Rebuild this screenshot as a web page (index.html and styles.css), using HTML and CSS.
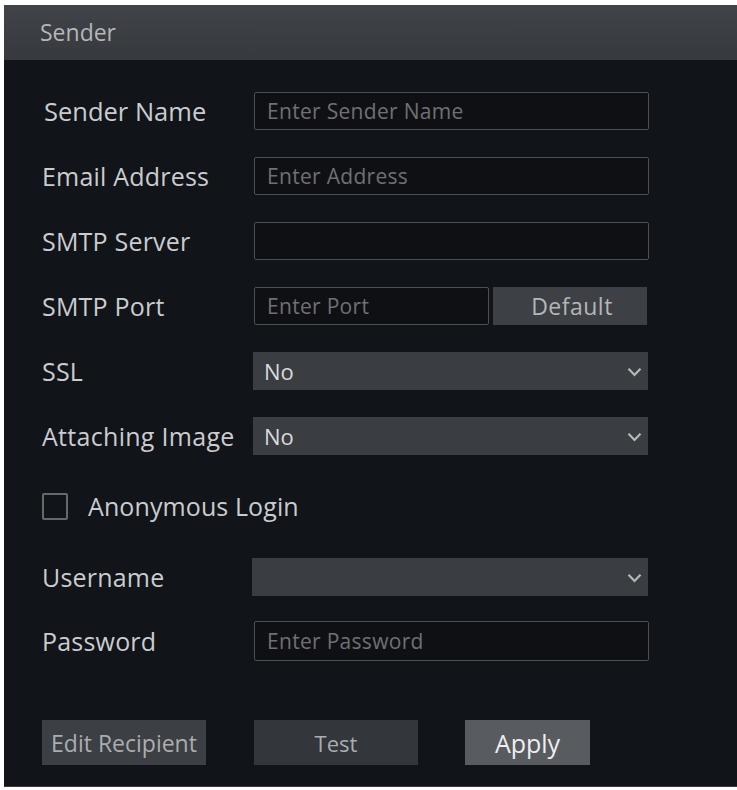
FILE: index.html
```html
<!DOCTYPE html>
<html>
<head>
<meta charset="utf-8">
<link rel="stylesheet" href="styles.css">
</head>
<body>
<div class="panel">
  <div class="header">Sender</div>
  <div class="form">
    <div class="row">
      <div class="label label-lg">Sender Name</div>
      <input class="field" placeholder="Enter Sender Name">
    </div>
    <div class="row">
      <div class="label">Email Address</div>
      <input class="field" placeholder="Enter Address">
    </div>
    <div class="row">
      <div class="label">SMTP Server</div>
      <input class="field">
    </div>
    <div class="row">
      <div class="label">SMTP Port</div>
      <div class="port-group">
        <input class="field field-port" placeholder="Enter Port">
        <div class="btn-default">Default</div>
      </div>
    </div>
    <div class="row">
      <div class="label">SSL</div>
      <div class="select"><span>No</span>
        <svg class="chev" width="15" height="10" viewBox="0 0 15 10"><path d="M1.5 1.8 L7.5 8 L13.5 1.8" fill="none" stroke="#b8b8b8" stroke-width="2.2"/></svg>
      </div>
    </div>
    <div class="row">
      <div class="label label-tight">Attaching Image</div>
      <div class="select"><span>No</span>
        <svg class="chev" width="15" height="10" viewBox="0 0 15 10"><path d="M1.5 1.8 L7.5 8 L13.5 1.8" fill="none" stroke="#b8b8b8" stroke-width="2.2"/></svg>
      </div>
    </div>
    <div class="row row-check">
      <div class="checkbox"></div>
      <div class="check-label">Anonymous Login</div>
    </div>
    <div class="row row-user">
      <div class="label">Username</div>
      <div class="select select-user"><span></span>
        <svg class="chev" width="15" height="10" viewBox="0 0 15 10"><path d="M1.5 1.8 L7.5 8 L13.5 1.8" fill="none" stroke="#b8b8b8" stroke-width="2.2"/></svg>
      </div>
    </div>
    <div class="row row-pass">
      <div class="label">Password</div>
      <input class="field field-pass" placeholder="Enter Password">
    </div>
    <div class="actions">
      <div class="btn btn-edit">Edit Recipient</div>
      <div class="btn btn-test">Test</div>
      <div class="btn btn-apply">Apply</div>
    </div>
  </div>
</div>
</body>
</html>
```
FILE: styles.css
```css
* { box-sizing: border-box; }
html, body { margin: 0; padding: 0; background: #ffffff; }
body {
  width: 737px;
  height: 790px;
  overflow: hidden;
  font-family: "Open Sans", "Noto Sans", sans-serif;
}
.panel {
  margin: 5px 0 0 4px;
  width: 733px;
  height: 782px;
  background: #111418;
  border-bottom: 1px solid #3a3c40;
}
.header {
  height: 55px;
  background: linear-gradient(#404348, #36393d);
  color: #b4b6b8;
  font-size: 23px;
  padding-left: 36px;
  display: flex;
  align-items: center;
  padding-bottom: 2px;
}
.form {
  padding: 32px 0 0 38px;
  display: flex;
  flex-direction: column;
  gap: 27px;
}
.row {
  display: flex;
  align-items: center;
  height: 38px;
}
.label {
  width: 212px;
  flex: none;
  color: #cacccf;
  font-size: 25px;
  letter-spacing: 0.2px;
  white-space: nowrap;
}
.label-lg { font-size: 25.5px; letter-spacing: 0; padding-left: 2px; }
.label-tight { letter-spacing: 0.3px; }
.field {
  width: 395px;
  height: 38px;
  background: #0e1013;
  border: 1.5px solid #4c4f53;
  border-radius: 2px;
  padding: 0 12px;
  font-family: inherit;
  font-size: 21px;
  letter-spacing: 0.3px;
  color: #c0c0c0;
  outline: none;
}
.field::placeholder { color: #6e7073; }
.port-group { display: flex; gap: 4px; }
.field-port { width: 235px; }
.btn-default {
  width: 154px;
  height: 38px;
  background: #3d4044;
  color: #b4b6b8;
  font-size: 23px;
  letter-spacing: 0.5px;
  display: flex;
  align-items: center;
  justify-content: center;
  padding-left: 4px;
}
.select {
  width: 395px;
  height: 38px;
  background: #3a3d41;
  display: flex;
  align-items: center;
  justify-content: space-between;
  padding: 0 6px 0 11px;
  color: #d8dadc;
  font-size: 22px;
  margin-left: -1px;
}
.select-user { width: 396px; margin-left: -2px; }
.chev { display: block; margin-top: 2px; }
.row-check { margin-top: 5px; height: 38px; }
.checkbox {
  width: 26px;
  height: 27px;
  border: 2px solid #66686b;
  border-radius: 2px;
  margin-right: 20px;
  flex: none;
}
.check-label {
  color: #cacccf;
  font-size: 25px;
  letter-spacing: 0.1px;
}
.row-user { margin-top: 6px; }
.row-pass { margin-top: -2px; height: 40px; }
.field-pass { height: 40px; }
.actions {
  margin-top: 32px;
  display: flex;
  align-items: flex-start;
}
.btn {
  height: 45px;
  display: flex;
  align-items: center;
  justify-content: center;
  font-size: 21px;
}
.btn-edit {
  width: 164px;
  background: #3c3f43;
  color: #abadaf;
  font-size: 23px;
  letter-spacing: 0;
  white-space: nowrap;
}
.btn-test {
  width: 164px;
  margin-left: 48px;
  background: #33363a;
  color: #aaacae;
  font-size: 22px;
}
.btn-apply {
  width: 125px;
  margin-left: 47px;
  background: #585b5f;
  color: #eeeeee;
  font-size: 25px;
}
```
